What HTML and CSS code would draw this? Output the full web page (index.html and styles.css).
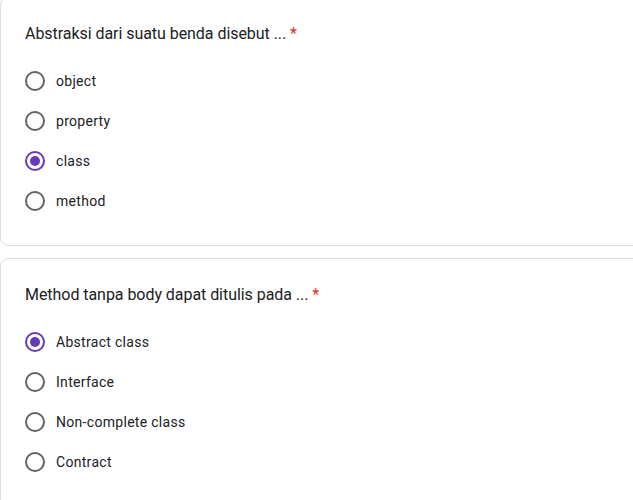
FILE: index.html
```html
<!DOCTYPE html>
<html lang="id">
<head>
<meta charset="utf-8">
<link rel="stylesheet" href="styles.css">
</head>
<body>
<div class="form">
  <div class="card">
    <div class="title">Abstraksi dari suatu benda disebut ... <span class="req">*</span></div>
    <div class="options">
      <div class="opt"><span class="radio"></span><span class="label">object</span></div>
      <div class="opt"><span class="radio"></span><span class="label">property</span></div>
      <div class="opt"><span class="radio checked"></span><span class="label">class</span></div>
      <div class="opt"><span class="radio"></span><span class="label">method</span></div>
    </div>
  </div>
  <div class="card">
    <div class="title">Method tanpa body dapat ditulis pada ... <span class="req">*</span></div>
    <div class="options">
      <div class="opt"><span class="radio checked"></span><span class="label">Abstract class</span></div>
      <div class="opt"><span class="radio"></span><span class="label">Interface</span></div>
      <div class="opt"><span class="radio"></span><span class="label">Non-complete class</span></div>
      <div class="opt"><span class="radio"></span><span class="label">Contract</span></div>
    </div>
  </div>
</div>
</body>
</html>
```
FILE: styles.css
```css
html, body {
  margin: 0;
  padding: 0;
  overflow: hidden;
  background: #fff;
}
body {
  font-family: Roboto, "Liberation Sans", Arial, sans-serif;
  color: #202124;
}
.form {
  display: flex;
  flex-direction: column;
  gap: 12px;
  margin-top: -3px;
  width: 700px;
}
.card {
  border: 1px solid #dadce0;
  border-radius: 8px;
  padding: 24px 23px 24px 23px;
  background: #fff;
}
.title {
  font-size: 16px;
  line-height: 24px;
  height: 24px;
  letter-spacing: -0.05px;
  padding-left: 1px;
}
.req {
  color: #d93025;
}
.options {
  margin-top: 15px;
  display: flex;
  flex-direction: column;
}
.opt {
  height: 40px;
  display: flex;
  align-items: center;
  font-size: 14px;
  letter-spacing: 0.3px;
}
.radio {
  box-sizing: border-box;
  width: 20px;
  height: 20px;
  border: 2px solid #5f6368;
  border-radius: 50%;
  margin-left: 1px;
  display: flex;
  align-items: center;
  justify-content: center;
}
.radio.checked {
  border-color: #673ab7;
}
.radio.checked::after {
  content: "";
  width: 10px;
  height: 10px;
  border-radius: 50%;
  background: #673ab7;
}
.label {
  margin-left: 11px;
}
```
